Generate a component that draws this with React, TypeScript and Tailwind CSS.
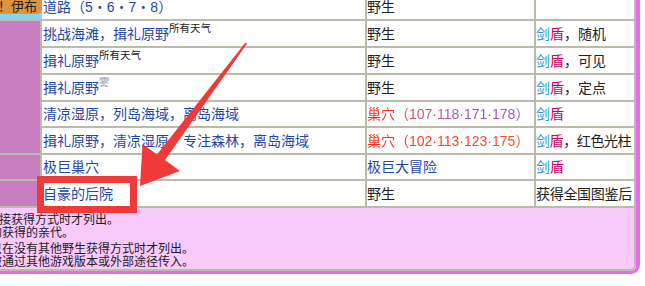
import React from "react";

const LINK = "text-[#2347a8]";

function Sword() {
  return (
    <>
      <span className="text-[#1a96e0]">剑</span>
      <span className="text-[#cc0066]">盾</span>
    </>
  );
}

function C({ children, className = "" }: { children?: React.ReactNode; className?: string }) {
  return (
    <div className={`bg-white flex items-center whitespace-nowrap overflow-hidden ${className}`}>{children}</div>
  );
}

export default function App() {
  return (
    <div className="w-[645px] h-[286px] overflow-hidden bg-white relative font-['Liberation_Sans','Noto_Sans_CJK_SC',sans-serif] text-[14px] text-[#222]">
      <div className="-mt-[6px] w-[640px] border-r-4 border-b-[3px] border-[#ee66ee] rounded-br-[9px]">
        <div className="border-r-2 border-b-2 border-[#bbbbab] rounded-br-[6px] bg-[#f9c9f9] overflow-hidden">
          <div className="grid grid-cols-[40px_323px_167px_98px] grid-rows-[25px_25px_25px_25px_24px_25px_24px_25px] gap-[2px] bg-[#bbbbab] border-b-2 border-[#bbbbab] leading-[18px]">
            {/* row 0 */}
            <div className="relative z-10 w-[42px] bg-[#8ed0f0]">
              <div className="h-[20px] pt-[6px] bg-[#df933c] rounded-br-[5px] flex items-center justify-end pr-[5px] text-[13px] overflow-hidden whitespace-nowrap">
                ！伊布
              </div>
            </div>
            <C className={`pl-[1px] ${LINK}`}>道路（5・6・7・8）</C>
            <C>野生</C>
            <C />

            {/* rows 1-5 purple */}
            <div className="row-span-5 bg-[#c77dbf]" />
            <C className={`pl-[1px] ${LINK}`}>
              挑战海滩，揖礼原野<sup className="text-[#222]">所有天气</sup>
            </C>
            <C>野生</C>
            <C>
              <Sword />，随机
            </C>

            <C className={`pl-[1px] ${LINK}`}>
              揖礼原野<sup className="text-[#222]">所有天气</sup>
            </C>
            <C>野生</C>
            <C>
              <Sword />，可见
            </C>

            <C className={`pl-[1px] ${LINK}`}>
              揖礼原野<sup className="text-[#999]">雾</sup>
            </C>
            <C>野生</C>
            <C>
              <Sword />，定点
            </C>

            <C className={`pl-[1px] ${LINK}`}>清凉湿原，列岛海域，离岛海域</C>
            <C>
              <span className="bg-gradient-to-r from-[#ff2a1a] from-[15%] to-[#9a52c4] to-[60%] bg-clip-text text-transparent">
                巢穴（107·118·171·178）
              </span>
            </C>
            <C>
              <Sword />
            </C>

            <C className={`pl-[1px] ${LINK}`}>揖礼原野，清凉湿原，专注森林，离岛海域</C>
            <C>
              <span className="bg-gradient-to-r from-[#ff2a1a] to-[#ff4a1a] bg-clip-text text-transparent">
                巢穴（102·113·123·175）
              </span>
            </C>
            <C className="tracking-[-0.4px]">
              <Sword />，红色光柱
            </C>

            {/* row 6 */}
            <div className="bg-[#c77dbf]" />
            <C className={`pl-[1px] ${LINK}`}>极巨巢穴</C>
            <C className={LINK}>极巨大冒险</C>
            <C>
              <Sword />
            </C>

            {/* row 7 */}
            <div className="bg-[#c77dbf]" />
            <C className={`pl-[1px] ${LINK}`}>自豪的后院</C>
            <C>野生</C>
            <C className="tracking-[-0.3px]">获得全国图鉴后</C>
          </div>

          <div className="h-[61px] pt-[6px] text-[12px] leading-[13px] text-[#1c1c28] whitespace-nowrap">
            <div className="-ml-[13px]">直接获得方式时才列出。</div>
            <div className="-ml-[10px]">的获得的亲代。</div>
            <div className="-ml-[10px] mt-[3px]">只在没有其他野生获得方式时才列出。</div>
            <div className="-ml-[10px]">被通过其他游戏版本或外部途径传入。</div>
          </div>
        </div>
      </div>

      <svg className="absolute inset-0 pointer-events-none" width="645" height="286" viewBox="0 0 645 286">
        <polygon
          points="245.5,42.5 247,43.8 165,160 180,171 140,186 142.5,144 157,154.5"
          fill="#f03a3a"
        />
        <rect x="40.5" y="179.5" width="93" height="30" fill="none" stroke="#f03a3a" strokeWidth="7" />
      </svg>
    </div>
  );
}
